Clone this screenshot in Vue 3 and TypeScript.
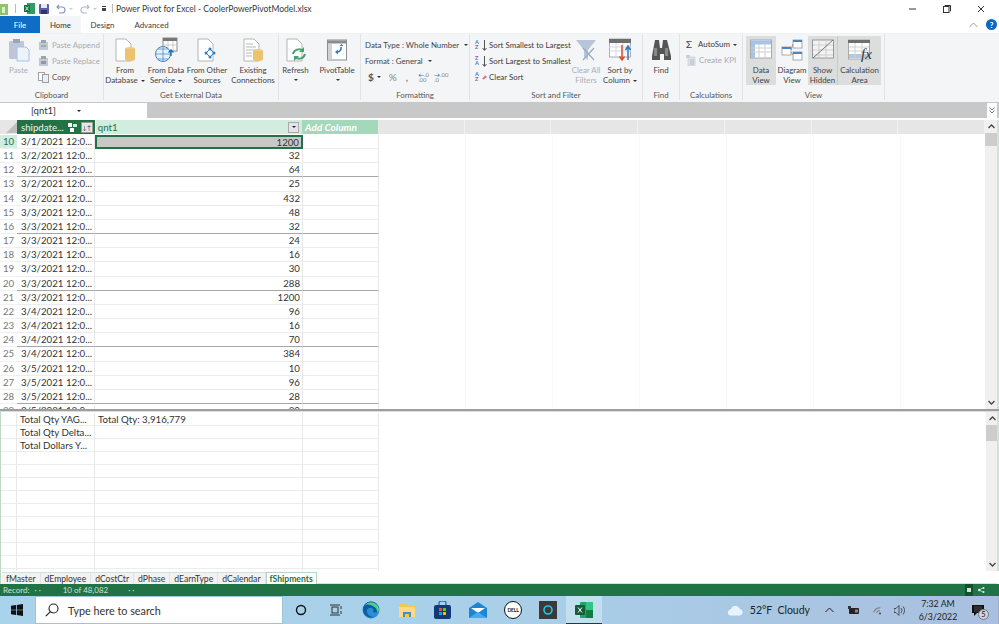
<script setup lang="ts">
interface Row { n: number; d: string; v: number }
const raw: [number, string, number][] = [
  [10,'3/1',1200],[11,'3/2',32],[12,'3/2',64],[13,'3/2',25],[14,'3/2',432],[15,'3/3',48],[16,'3/3',32],
  [17,'3/3',24],[18,'3/3',16],[19,'3/3',30],[20,'3/3',288],[21,'3/3',1200],[22,'3/4',96],[23,'3/4',16],
  [24,'3/4',70],[25,'3/4',384],[26,'3/5',10],[27,'3/5',96],[28,'3/5',28],[29,'3/5',30]
]
const rows: Row[] = raw.map(([n, d, v]) => ({ n, d: d + '/2021 12:0...', v }))
const blanks = Array.from({ length: 7 }, (_, i) => i)
const lower = ['Total Qty YAG...', 'Total Qty Delta...', 'Total Dollars Y...', '', '', '', '', '', '', '', '', '', '']
const sheets = ['fMaster', 'dEmployee', 'dCostCtr', 'dPhase', 'dEarnType', 'dCalendar']
</script>

<template>
  <div class="app">
    <header class="title">
      <div class="qat">
        <svg width="9" height="12" viewBox="0 0 9 12"><rect width="8" height="11" y="1" fill="#8cc56a"/><rect x="2" y="4" width="3" height="6" fill="#d9efc6"/></svg>
        <span class="tick"></span>
        <svg class="q1" width="11" height="11" viewBox="0 0 11 11"><rect x="3" y="0" width="8" height="11" fill="#2f9e63"/><rect x="0" y="2" width="6" height="7" fill="#15703f"/><path d="M1.500 3.500l3 4m0-4l-3 4" stroke="#fff" stroke-width=".8"/></svg>
        <svg class="q2" width="10" height="10" viewBox="0 0 10 10"><rect width="10" height="10" rx="1" fill="#5b5ea6"/><rect x="2" y="0" width="6" height="4" fill="#e8e8f4"/><rect x="2" y="6" width="6" height="4" fill="#30336f"/></svg>
        <svg class="q3" width="10" height="10" viewBox="0 0 10 10"><path d="M3 1L1 3l2 2M1 3h5a3 3 0 0 1 0 6H3" fill="none" stroke="#7d95c2" stroke-width="1.100"/></svg>
        <span class="mini-caret q3b"></span>
        <svg class="q4" width="10" height="10" viewBox="0 0 10 10"><path d="M7 1l2 2-2 2M9 3H4a3 3 0 0 0 0 6h3" fill="none" stroke="#a9bad8" stroke-width="1.100"/></svg>
        <span class="mini-caret q4b"></span>
        <span class="custom"></span>
        <span class="tick t2"></span>
      </div>
      <span class="doc">Power Pivot for Excel - CoolerPowerPivotModel.xlsx</span>
      <div class="win">
        <svg width="8" height="8" viewBox="0 0 8 8"><path d="M0 4h7" stroke="#333" stroke-width="1"/></svg>
        <svg width="8" height="8" viewBox="0 0 8 8"><rect x=".5" y="1.500" width="5.500" height="6" fill="none" stroke="#333"/><path d="M2 1V.5h5.500V6H7" fill="none" stroke="#333"/></svg>
        <svg width="8" height="8" viewBox="0 0 8 8"><path d="M1 1l6 6M7 1L1 7" stroke="#333" stroke-width="1"/></svg>
      </div>
    </header>

    <nav class="tabs">
      <span class="tab file">File</span>
      <span class="tab home">Home</span>
      <span class="tab design">Design</span>
      <span class="tab adv">Advanced</span>
      <span class="spacer"></span>
      <svg class="collapse" width="9" height="6" viewBox="0 0 9 6"><path d="M.5 5l4-4 4 4" fill="none" stroke="#999"/></svg>
      <span class="help">?</span>
    </nav>

    <section class="ribbon">
      <div class="group" style="width:104px">
        <div class="body">
          <div class="big dim" style="width:37px">
            <svg class="ico" width="22" height="24" viewBox="0 0 22 24"><rect x="1" y="3" width="15" height="18" rx="1" fill="#bcc7d8"/><rect x="5" y="1" width="7" height="4" fill="#9aa6b8"/><path d="M9 9h9l3 3v11H9z" fill="#eef2fa" stroke="#a9c1e4"/></svg>
            <span>Paste</span>
          </div>
          <div class="small-col dim-text">
            <div class="small"><svg width="11" height="11" viewBox="0 0 11 11"><rect x="1" y="2" width="9" height="8" fill="#c3c9d2"/><rect x="3" y="0" width="5" height="3" fill="#9aa3ae"/><path d="M3 6h5" stroke="#7f8995"/></svg><span>Paste Append</span></div>
            <div class="small"><svg width="11" height="11" viewBox="0 0 11 11"><rect x="1" y="2" width="9" height="8" fill="#c3c9d2"/><rect x="3" y="0" width="5" height="3" fill="#9aa3ae"/><rect x="3" y="5" width="5" height="3" fill="#8e98a5"/></svg><span>Paste Replace</span></div>
            <div class="small copy"><svg width="11" height="11" viewBox="0 0 11 11"><rect x=".5" y=".5" width="6" height="8" fill="#fff" stroke="#a3a3a3"/><rect x="4.500" y="2.500" width="6" height="8" fill="#e7eef8" stroke="#9d9d9d"/></svg><span>Copy</span></div>
          </div>
        </div>
        <div class="label">Clipboard</div>
      </div>

      <div class="group" style="width:175px">
        <div class="body">
          <div class="big" style="width:42px">
            <svg class="ico" width="22" height="24" viewBox="0 0 22 24"><path d="M2 1h10l5 5v17H2z" fill="#fff" stroke="#b5b5b5"/><ellipse cx="16" cy="11" rx="5" ry="2" fill="#edcd87"/><path d="M11 11v10a5 2 0 0 0 10 0V11z" fill="#edc26f"/></svg>
            <span>From</span><span>Database <i class="caret"></i></span>
          </div>
          <div class="big" style="width:40px">
            <svg class="ico" width="24" height="24" viewBox="0 0 24 24"><rect x="9" y="0" width="14" height="13" fill="#fff" stroke="#8e8e8e"/><rect x="9" y="0" width="14" height="3" fill="#777"/><path d="M9 7h14M14 3v10M19 3v10" stroke="#b9b9b9" stroke-width=".7"/><circle cx="9" cy="16" r="7.500" fill="#e7f1fb" stroke="#3d83c4"/><path d="M2 16h14M9 9v14M4 11h10M4 21h10" stroke="#3d83c4" stroke-width=".7"/><path d="M17 12v6M14.500 14.500L17 12l2.500 2.500" stroke="#1f6fb8" stroke-width="1.400" fill="none"/></svg>
            <span>From Data</span><span>Service <i class="caret"></i></span>
          </div>
          <div class="big" style="width:42px">
            <svg class="ico" width="22" height="24" viewBox="0 0 22 24"><path d="M2 1h10l5 5v17H2z" fill="#fff" stroke="#b5b5b5"/><path d="M14 11l-4 4 4 4 4-4z" fill="none" stroke="#2f79bd"/><circle cx="14" cy="11" r="1.500" fill="#2f79bd"/><circle cx="10" cy="15" r="1.500" fill="#2f79bd"/><circle cx="18" cy="15" r="1.500" fill="#2f79bd"/><circle cx="14" cy="19" r="1.500" fill="#2f79bd"/></svg>
            <span>From Other</span><span>Sources</span>
          </div>
          <div class="big" style="width:50px">
            <svg class="ico" width="22" height="24" viewBox="0 0 22 24"><path d="M2 1h10l5 5v17H2z" fill="#fff" stroke="#b5b5b5"/><path d="M4 6h7M4 9h10M4 12h10M4 15h6M4 18h6" stroke="#a5a5a5" stroke-width=".8"/><ellipse cx="16" cy="13" rx="5" ry="2" fill="#edcd87"/><path d="M11 13v8a5 2 0 0 0 10 0v-8z" fill="#edc26f"/></svg>
            <span>Existing</span><span>Connections</span>
          </div>
        </div>
        <div class="label">Get External Data</div>
      </div>

      <div class="group" style="width:82px">
        <div class="body">
          <div class="big" style="width:33px">
            <svg class="ico" width="22" height="24" viewBox="0 0 22 24"><path d="M2 1h10l5 5v17H2z" fill="#fff" stroke="#b5b5b5"/><path d="M8 16a6 6 0 0 1 10-3M20 16a6 6 0 0 1-10 3" fill="none" stroke="#45a36f" stroke-width="2"/><path d="M19 9v5h-5zM9 23v-5h5z" fill="#45a36f"/></svg>
            <span>Refresh</span><i class="caret under"></i>
          </div>
          <div class="big pivot" style="width:44px">
            <svg class="ico" width="20" height="24" viewBox="0 0 20 24"><rect x=".5" y="2" width="19" height="20" fill="#fff" stroke="#8e8e8e"/><rect x="1" y="2.500" width="18" height="3" fill="#8c8c8c"/><rect x="1" y="6" width="4" height="15" fill="#d2d2d2"/><path d="M14 9a4 4 0 0 1-4 5" fill="none" stroke="#2d7cc1" stroke-width="1.600"/><path d="M8 14l3-2.500v5zM12.500 8l2-2 2 2z" fill="#2d7cc1"/></svg>
            <span>PivotTable</span><i class="caret under"></i>
          </div>
        </div>
        <div class="label">&nbsp;</div>
      </div>

      <div class="group" style="width:109px">
        <div class="body fmt">
          <div class="fline">Data Type : Whole Number <i class="caret"></i></div>
          <div class="fline">Format : General <i class="caret"></i></div>
          <div class="fline syms"><b class="sym">$</b><i class="caret c2"></i><span class="sym g pct">%</span><b class="sym g c3">,</b><span class="dec"><b>←</b>.0<br>.00</span><span class="dec d2"><b>→</b>.00<br>.0</span></div>
        </div>
        <div class="label">Formatting</div>
      </div>

      <div class="group" style="width:173px">
        <div class="body">
          <div class="small-col sort">
            <div class="small"><span class="az"><em>A</em><em class="p">Z</em></span><svg width="5" height="11" viewBox="0 0 5 11"><path d="M2.500 0v10M.5 8l2 2.500L4.500 8" fill="none" stroke="#555"/></svg><span>Sort Smallest to Largest</span></div>
            <div class="small"><span class="az"><em class="p">Z</em><em>A</em></span><svg width="5" height="11" viewBox="0 0 5 11"><path d="M2.500 0v10M.5 8l2 2.500L4.500 8" fill="none" stroke="#555"/></svg><span>Sort Largest to Smallest</span></div>
            <div class="small"><span class="az"><em>A</em><em class="p">Z</em></span><svg width="5" height="8" viewBox="0 0 6 8"><path d="M0 6l4-4 2 2-4 3z" fill="#e0708a"/></svg><span>Clear Sort</span></div>
          </div>
          <div class="big dim" style="width:34px">
            <svg class="ico" width="22" height="24" viewBox="0 0 22 24"><path d="M1 2h20l-8 10v10l-4-3v-7z" fill="#b7c5da"/><path d="M8 10l11 12M19 10L8 22" stroke="#97a9c5" stroke-width="1.200"/></svg>
            <span>Clear All</span><span>Filters</span>
          </div>
          <div class="big" style="width:34px">
            <svg class="ico" width="22" height="24" viewBox="0 0 22 24"><rect x=".5" y="1" width="21" height="18" fill="#fff" stroke="#aaa"/><rect x="0" y="1" width="22" height="4" fill="#6e6e6e"/><path d="M0 9h22M0 13h22M7 5v14M14 5v14" stroke="#cfd8e6"/><path d="M13 7v14M10.500 18.500L13 22l2.500-3.500" stroke="#d9502a" stroke-width="1.500" fill="none"/><path d="M19 22V9M16.500 12L19 8l2.500 4" stroke="#2d7cc1" stroke-width="1.500" fill="none"/></svg>
            <span>Sort by</span><span>Column <i class="caret"></i></span>
          </div>
        </div>
        <div class="label">Sort and Filter</div>
      </div>

      <div class="group" style="width:37px">
        <div class="body">
          <div class="big" style="width:36px">
            <svg class="ico" width="20" height="24" viewBox="0 0 20 24"><path d="M4 2h4l1 8h2l1-8h4l4 16v4h-7v-6H9v6H1v-4z" fill="#555"/><rect x="3" y="10" width="3" height="8" fill="#888"/><rect x="14" y="10" width="3" height="8" fill="#888"/></svg>
            <span>Find</span>
          </div>
        </div>
        <div class="label">Find</div>
      </div>

      <div class="group" style="width:63px">
        <div class="body">
          <div class="small-col calc">
            <div class="small"><span class="sigma">Σ</span><span>AutoSum <i class="caret"></i></span></div>
            <div class="small dim-text"><svg width="10" height="11" viewBox="0 0 10 11"><rect x="0" y="0" width="4" height="3" fill="#c7d3e4"/><rect x="2" y="2" width="7" height="9" fill="#dde3eb" stroke="#b8c0cc" stroke-width=".5"/><path d="M4 5h4M4 7h4M4 9h4" stroke="#99a3b0" stroke-width=".6"/></svg><span>Create KPI</span></div>
          </div>
        </div>
        <div class="label">Calculations</div>
      </div>

      <div class="group view" style="width:142px">
        <div class="body">
          <div class="big on" style="width:30px">
            <svg class="ico" width="22" height="24" viewBox="0 0 22 24"><rect x=".5" y="2" width="21" height="18" fill="#fff" stroke="#aaa"/><rect x="1" y="2.500" width="20" height="4" fill="#a8c4e4"/><rect x="1" y="6" width="4" height="14" fill="#a8c4e4"/><path d="M1 10h20M1 14h20M9 6v14M15 6v14" stroke="#cfcfcf"/></svg>
            <span>Data</span><span>View</span>
          </div>
          <div class="big" style="width:32px">
            <svg class="ico" width="22" height="24" viewBox="0 0 22 24"><rect x="12" y="2" width="9" height="8" fill="#fff" stroke="#aaa"/><rect x="12" y="2" width="9" height="2" fill="#4a86c5"/><rect x="1" y="9" width="9" height="8" fill="#fff" stroke="#aaa"/><rect x="1" y="9" width="9" height="2" fill="#4a86c5"/><rect x="12" y="14" width="9" height="8" fill="#fff" stroke="#aaa"/><rect x="12" y="14" width="9" height="2" fill="#4a86c5"/><path d="M10 12l2-6M10 14l2 3" stroke="#999"/></svg>
            <span>Diagram</span><span>View</span>
          </div>
          <div class="big on first" style="width:30px">
            <svg class="ico" width="22" height="24" viewBox="0 0 22 24"><rect x=".5" y="2" width="21" height="18" fill="#f3f3f3" stroke="#999"/><path d="M1 7h20M1 12h20M1 17h20M7 2v18M14 2v18" stroke="#cfcfcf"/><path d="M1 20L21 2" stroke="#777"/></svg>
            <span>Show</span><span>Hidden</span>
          </div>
          <div class="big on second" style="width:43px">
            <svg class="ico" width="24" height="24" viewBox="0 0 24 24"><rect x=".5" y="2" width="21" height="19" fill="#fff" stroke="#aaa"/><rect x="0" y="2" width="22" height="3" fill="#6e6e6e"/><rect x="1" y="16" width="20" height="4" fill="#b5c8e2"/><path d="M1 9h20M1 13h20M7 5v15M14 5v15" stroke="#cfcfcf"/><text x="13" y="21" font-family="Liberation Serif,serif" font-style="italic" font-size="15" fill="#333">fx</text></svg>
            <span>Calculation</span><span>Area</span>
          </div>
        </div>
        <div class="label">View</div>
      </div>
      <div class="rest"></div>
    </section>

    <div class="formula">
      <div class="namebox"><span>[qnt1]</span><i class="caret dark"></i></div>
      <span class="spacer"></span>
      <span class="expand"><svg width="6" height="7" viewBox="0 0 6 7"><path d="M.5 .5L3 3 5.500 .5M.5 3.500L3 6l2.500-2.500" fill="none" stroke="#777"/></svg></span>
    </div>

    <main class="pane upper">
      <div class="grid">
        <div class="hrow">
          <div class="corner"><i></i></div>
          <div class="hcell ship"><span>shipdate...</span><svg width="10" height="10" viewBox="0 0 10 10"><rect x="0" y="1" width="4" height="4" fill="#fff"/><rect x="5" y="2" width="4" height="3" fill="#cfe8da"/><rect x="2" y="6" width="4" height="4" fill="#fff"/></svg><span class="filter">↓↑</span></div>
          <div class="hcell qnt"><span>qnt1</span><span class="drop"><i class="caret dark"></i></span></div>
          <div class="hcell add">Add Column</div>
          <div v-for="b in blanks" :key="b" class="hcell blank"></div>
        </div>
        <div class="rows">
          <div v-for="r in rows" :key="r.n" class="row" :class="{ sel: r.n === 10, fourth: r.n % 4 === 0 }">
            <div class="num">{{ r.n }}</div>
            <div class="cell date">{{ r.d }}</div>
            <div class="cell val">{{ r.v }}</div>
            <div class="cell addc"></div>
            <div v-for="b in blanks" :key="b" class="cell blank"></div>
          </div>
        </div>
      </div>
      <div class="scroll">
        <span class="arrow"><svg width="7" height="5" viewBox="0 0 7 5"><path d="M.5 4L3.500 1l3 3" fill="none" stroke="#444" stroke-width="1.300"/></svg></span>
        <span class="thumb"></span>
        <span class="spacer"></span>
        <span class="arrow"><svg width="7" height="5" viewBox="0 0 7 5"><path d="M.5 1l3 3 3-3" fill="none" stroke="#444" stroke-width="1.300"/></svg></span>
      </div>
    </main>

    <div class="split"></div>

    <section class="pane lower">
      <div class="grid low-grid">
        <div v-for="(t, i) in lower" :key="i" class="lrow">
          <div class="num"></div>
          <div class="cell date">{{ t }}</div>
          <div class="cell val left">{{ i === 0 ? 'Total Qty: 3,916,779' : '' }}</div>
          <div class="cell addc"></div>
        </div>
      </div>
      <div class="scroll">
        <span class="arrow"><svg width="7" height="5" viewBox="0 0 7 5"><path d="M.5 4L3.500 1l3 3" fill="none" stroke="#444" stroke-width="1.300"/></svg></span>
        <span class="thumb low"></span>
        <span class="spacer"></span>
        <span class="arrow"><svg width="7" height="5" viewBox="0 0 7 5"><path d="M.5 1l3 3 3-3" fill="none" stroke="#444" stroke-width="1.300"/></svg></span>
      </div>
    </section>

    <div class="sheets">
      <span v-for="s in sheets" :key="s" class="sheet">{{ s }}</span>
      <span class="sheet active">fShipments</span>
      <span class="sheet-fill"></span>
    </div>

    <div class="status">
      <span>Record:</span><span class="dots">· ·</span><span class="rec">10 of 48,082</span><span class="dots d2">· ·</span>
      <span class="spacer"></span>
      <span class="viewbtn"><i></i></span>
      <svg class="viewshare" width="7" height="6" viewBox="0 0 7 6"><path d="M1 3l4-2M1 3l4 2" stroke="#cfe4d8" stroke-width=".8"/><circle cx="1.200" cy="3" r="1.200" fill="#e4f0e9"/><circle cx="5.500" cy="1" r="1" fill="#e4f0e9"/><circle cx="5.500" cy="5" r="1" fill="#e4f0e9"/></svg>
    </div>

    <footer class="taskbar">
      <svg class="win-logo" width="12" height="12" viewBox="0 0 12 12"><path d="M0 1.700L5 1v4.700H0zM5.800 .9L12 0v5.700H5.800zM0 6.300h5V11l-5-.7zM5.800 6.300H12V12l-6.200-.9z" fill="#111"/></svg>
      <div class="search">
        <svg width="14" height="14" viewBox="0 0 14 14"><circle cx="8.500" cy="5.500" r="4.500" fill="none" stroke="#222" stroke-width="1.100"/><path d="M5.200 8.800L.8 13.200" stroke="#222" stroke-width="1.200"/></svg>
        <span>Type here to search</span>
      </div>
      <div class="apps">
        <span class="app-slot"><svg width="12" height="12" viewBox="0 0 12 12"><circle cx="6" cy="6" r="4.500" fill="none" stroke="#111" stroke-width="1.400"/></svg></span>
        <span class="app-slot"><svg width="12" height="12" viewBox="0 0 12 12"><rect x="2" y="3" width="6" height="6" fill="none" stroke="#333"/><path d="M0 1h10M0 11h10M11 2v3M11 7v3" stroke="#333"/></svg></span>
        <span class="app-slot"><svg width="18" height="18" viewBox="0 0 18 18"><circle cx="9" cy="9" r="8.500" fill="#2b8fd0"/><path d="M1 9a8 8 0 0 1 16-1c0 3-3 4-6 3 2-4-4-6-6-2-1 3 2 7 7 7a8 8 0 0 1-11-7z" fill="#0f5aa6"/><path d="M3 4a8 8 0 0 1 14 5c0 1-1 2-2 2 1-5-8-9-12-7z" fill="#4fd08a"/></svg></span>
        <span class="app-slot"><svg width="16" height="14" viewBox="0 0 16 14"><path d="M0 1h6l1 2h9v11H0z" fill="#f4c84f"/><path d="M0 4h16v10H0z" fill="#fbdb7c"/><path d="M4 9h8v5H4z" fill="#3d8ed4"/><path d="M6 11h4v3H6z" fill="#f4c84f"/></svg></span>
        <span class="app-slot"><svg width="17" height="18" viewBox="0 0 17 18"><rect x="0" y="4" width="17" height="14" rx="2" fill="#123a76"/><path d="M5 4V2a2 2 0 0 1 2-2h3a2 2 0 0 1 2 2v2" fill="none" stroke="#2b68b8" stroke-width="1.300"/><rect x="5" y="7" width="3" height="3" fill="#f25022"/><rect x="9" y="7" width="3" height="3" fill="#7fba00"/><rect x="5" y="11" width="3" height="3" fill="#00a4ef"/><rect x="9" y="11" width="3" height="3" fill="#ffb900"/></svg></span>
        <span class="app-slot"><svg width="18" height="16" viewBox="0 0 18 16"><path d="M0 6l9-6 9 6v10H0z" fill="#1b86d6"/><path d="M2 6h14l-7 5z" fill="#fff"/><path d="M0 16l9-6 9 6z" fill="#4ba8ea"/></svg></span>
        <span class="app-slot"><span class="dell">DELL</span></span>
        <span class="app-slot"><svg width="18" height="18" viewBox="0 0 18 18"><rect width="18" height="18" fill="#3a3a3a"/><circle cx="9" cy="9" r="4" fill="none" stroke="#2fc4dd" stroke-width="1.600"/></svg></span>
        <span class="app-slot current"><svg width="18" height="16" viewBox="0 0 18 16"><rect x="5" y="0" width="13" height="16" rx="1" fill="#21a366"/><rect x="11" y="0" width="7" height="8" fill="#33c481"/><rect x="11" y="8" width="7" height="8" fill="#107c41"/><rect x="0" y="3" width="10" height="10" rx="1" fill="#185c37"/><path d="M3 5.500l4 5m0-5l-4 5" stroke="#fff" stroke-width="1"/></svg></span>
      </div>
      <span class="spacer"></span>
      <div class="tray">
        <svg class="cloud" width="17" height="12" viewBox="0 0 17 12"><path d="M4 12a3.500 3.500 0 0 1-.5-7A5 5 0 0 1 13 4.500 3.800 3.800 0 0 1 13 12z" fill="#e8f3fb" stroke="#79b9e6" stroke-width=".6"/></svg>
        <span class="weather">52°F&nbsp; Cloudy</span>
        <svg class="t-up" width="9" height="6" viewBox="0 0 9 6"><path d="M.5 5l4-4 4 4" fill="none" stroke="#222"/></svg>
        <svg class="t-bat" width="12" height="8" viewBox="0 0 12 8"><rect x="1" y="2" width="10" height="6" rx="1" fill="#222"/><rect x="0" y="0" width="3" height="3" fill="#333"/><rect x="7" y="3.500" width="3" height="3" fill="#888"/></svg>
        <svg class="t-wifi" width="10" height="10" viewBox="0 0 10 10"><path d="M1 5a7 7 0 0 1 8 0M3 7a4 4 0 0 1 4 0" fill="none" stroke="#777" transform="rotate(-35 5 5)"/><circle cx="8" cy="8.500" r="1" fill="#444"/></svg>
        <svg class="t-vol" width="12" height="11" viewBox="0 0 12 11"><path d="M0 3.500h2l3-3v10l-3-3H0z" fill="none" stroke="#333" stroke-width=".8"/><path d="M7 3a4 4 0 0 1 0 5M9 1.500a6 6 0 0 1 0 8" fill="none" stroke="#333" stroke-width=".8"/></svg>
        <div class="clock"><span>7:32 AM</span><span>6/3/2022</span></div>
        <div class="notif"><svg width="12" height="11" viewBox="0 0 12 11"><path d="M0 0h12v8H5L2 11V8H0z" fill="#111"/><path d="M2 2h8M2 4h8M2 6h5" stroke="#777" stroke-width=".6"/></svg><span class="badge">5</span></div>
      </div>
    </footer>
  </div>
</template>

<style>
html, body { margin: 0; background: #fff; }
</style>

<style scoped>
* { box-sizing: border-box; }
i, em { font-style: normal; }
.app { width: 999px; height: 624px; display: flex; flex-direction: column; overflow: hidden; background: #fff; color: #3c3c3c; font-family: Lato, Roboto, sans-serif; font-size: 7.900px; }
.spacer { flex: 1; }
svg { flex: none; }

.title { height: 16px; display: flex; align-items: center; flex: none; padding-top: 1px; }
.qat { width: 116px; display: flex; align-items: center; flex: none; height: 14px; }
.tick { width: 1px; height: 9px; background: #bbb; margin-left: 6px; }
.q1 { margin-left: 8px; }
.q2 { margin-left: 4px; }
.q3 { margin-left: 7px; }
.q4 { margin-left: 7px; }
.mini-caret { width: 0; height: 0; border: 2px solid transparent; border-top: 2px solid #ccc; margin: 2px 0 0 3px; }
.q4b { margin-right: 4px; }
.custom { width: 4px; height: 5px; margin-left: 1px; background: linear-gradient(#444 0 1px, transparent 1px 2px, #444 2px); }
.t2 { margin-left: 6px; }
.doc { font-size: 8.550px; color: #3a3a3a; }
.win { margin-left: auto; width: 92px; display: flex; justify-content: space-between; padding-right: 14px; padding-left: 2px; }

.tabs { height: 17px; flex: none; display: flex; align-items: stretch; font-size: 7.900px; }
.tab { display: flex; align-items: center; justify-content: center; }
.file { width: 40px; background: #0f6dc6; color: #fff; }
.home { width: 41px; background: #f4f5f7; color: #333; }
.design { margin-left: 9px; width: 25px; }
.adv { margin-left: 20px; width: 33px; }
.collapse { align-self: center; margin-right: 8px; }
.help { width: 11px; height: 11px; border-radius: 50%; align-self: center; background: #0b68c2; color: #fff; font-size: 8px; font-weight: 700; display: flex; align-items: center; justify-content: center; margin-right: 2px; }

.ribbon { height: 69px; flex: none; display: flex; background: #f4f5f7; border-top: 1px solid #f0f1f3; }
.group { flex: none; display: flex; flex-direction: column; border-right: 1px solid #e1e3e6; margin-bottom: 2px; }
.body { height: 56px; display: flex; padding-top: 2px; flex: none; }
.view .body { padding-left: 3px; }
.label { text-align: center; color: #555; line-height: 10px; }
.rest { flex: 1; }
.big { flex: none; display: flex; flex-direction: column; align-items: center; line-height: 10px; white-space: nowrap; color: #444; }
.ico { height: 26px; margin-bottom: 2px; margin-top: 1px; }
.pivot { margin-left: 3px; }
.big.dim { color: #aab0b8; }
.big.on { background: #dcdddd; height: 49px; }
.big.first { border-right: 1px solid #c9c9c9; }
.small-col { display: flex; flex-direction: column; padding-left: 1px; padding-top: 1px; }
.small { height: 16px; display: flex; align-items: center; gap: 3px; white-space: nowrap; }
.dim-text { color: #a7abb2; }
.copy { color: #555; }
.caret { display: inline-block; width: 0; height: 0; border-left: 2px solid transparent; border-right: 2px solid transparent; border-top: 2px solid #333; vertical-align: middle; margin-left: 1px; }
.caret.under { margin-top: 4px; }
.caret.dark { border-top-color: #222; }

.fmt { flex-direction: column; padding-left: 4px; padding-top: 3px; }
.fline { height: 16px; display: flex; align-items: center; white-space: pre; color: #444; flex: none; }
.fline .caret { margin-left: 3px; }
.syms { color: #555; }
.sym { font-size: 10px; margin-left: 3px; }
.sym.g { color: #888; margin-left: 5px; }
.caret.c2 { margin-left: 3px; }
.pct { margin-left: 8px !important; }
.c3 { margin-left: 9px !important; }
.dec { font-size: 6px; line-height: 5.500px; margin-left: 10px; color: #888; }
.dec b { color: #2d7cc1; font-size: 6px; }
.dec.d2 { margin-left: 5px; }

.sort { padding-left: 5px; width: 99px; flex: none; }
.sort .small { gap: 1px; }
.sort .small > span:last-child { margin-left: 1px; }
.az { width: 6px; flex: none; display: flex; flex-direction: column; font-size: 5.500px; line-height: 5.500px; font-weight: 700; color: #3a7fbe; }
.az .p { color: #8b5fb0; }
.calc { padding-left: 6px; padding-top: 0; }
.sigma { font-size: 10px; color: #444; width: 9px; flex: none; }

.formula { height: 16px; flex: none; display: flex; background: #c8c8c8; align-items: stretch; padding-right: 2px; margin-bottom: 2px; border-top: 1px solid #c8c8c8; }
.namebox { width: 147px; background: #fff; display: flex; align-items: center; gap: 20px; padding-left: 31px; font-size: 9.500px; color: #333; }
.expand { width: 10px; background: #fff; display: flex; align-items: center; justify-content: center; }

.pane { display: flex; flex: none; overflow: hidden; font-size: 9.700px; color: #333; background: #fff; border-right: 2px solid #cfe3d8; }
.upper { height: 289px; }
.lower { height: 159px; border-left: 1px solid #b7d8c5; }
.grid { width: 985px; flex: none; overflow: hidden; }
.low-grid { padding-top: 1px; }
.hrow { display: flex; height: 15px; }
.corner { width: 17px; background: #e6e6e6; display: flex; justify-content: flex-end; align-items: flex-end; padding-bottom: 1px; height: 14px; }
.corner i { border-style: solid; border-width: 0 0 11px 11px; border-color: transparent transparent #bfbfbf transparent; }
.hcell { display: flex; align-items: center; padding: 0 2px 0 4px; height: 14px; white-space: nowrap; }
.ship { width: 78px; background: #217346; color: #e8f5ee; gap: 3px; }
.ship span:first-child { flex: 1; min-width: 0; }
.filter { width: 12px; height: 11px; background: #e8e8e8; color: #335; font-size: 6px; line-height: 9px; text-align: center; border: 1px solid #999; flex: none; }
.qnt { width: 208px; background: #d2ecdf; color: #217346; justify-content: space-between; padding-left: 2px; border-left: 1px solid #fff; }
.drop { width: 11px; height: 11px; background: #e4e4ec; border: 1px solid #aaa; display: flex; align-items: center; justify-content: center; margin-right: 1px; }
.drop .caret { margin: 0; }
.add { width: 76px; background: #a3d8bb; color: #fff; font-style: italic; font-weight: 700; padding-left: 3px; font-size: 10px; }
.hcell.blank { width: 87px; background: #e6e6e6; padding: 0; border-right: 1px solid #f1f1f1; }

.rows { height: 274px; overflow: hidden; }
.row { display: flex; height: 14.170px; }
.num { width: 17px; flex: none; color: #777; text-align: center; font-size: 9.700px; line-height: 13px; border-bottom: 1px solid #f1f1f1; }
.row.sel .num { background: #d2ecdf; color: #217346; }
.cell { height: 100%; line-height: 13.500px; border-right: 1px solid #e8e8e8; border-bottom: 1px solid #ececec; white-space: nowrap; overflow: hidden; flex: none; }
.date { width: 78px; padding-left: 4px; }
.val { width: 208px; text-align: right; padding-right: 2px; }
.left { text-align: left; padding-left: 3px; }
.addc { width: 76px; }
.cell.blank { width: 87px; border-right: 1px solid #f8f8f8; border-bottom: none; }
.row.fourth .date, .row.fourth .val, .row.fourth .addc { border-bottom: 1px solid #a6a6a6; }
.row.sel .val { background: #c8c8c8; border: 2px solid #217346; line-height: 10px; }

.scroll { width: 12px; flex: none; background: #f0f0f0; display: flex; flex-direction: column; }
.arrow { height: 13px; display: flex; align-items: center; justify-content: center; flex: none; }
.thumb { height: 13px; background: #cdcdcd; flex: none; }
.thumb.low { height: 16px; }

.split { height: 3px; flex: none; background: #9e9e9e; border-bottom: 1px solid #ddd; }
.lrow { display: flex; height: 13px; }
.lrow .num { height: 13px; width: 16px; border-right: 1px solid #e8e8e8; border-bottom: 1px solid #ececec; }
.lrow .cell { line-height: 12.500px; }
.lrow .date { padding-left: 3px; }

.sheets { height: 13px; flex: none; display: flex; background: #fff; padding: 1px 2px 0 1px; border-left: 1px solid #b7d8c5; font-size: 8.600px; color: #333; }
.sheet { padding: 0 4px; background: #f2f2f2; line-height: 12px; border-right: 1px solid #e2e2e2; border-top: 1px solid #cfe3d8; }
.sheet.active { background: #fff; color: #217346; font-weight: 700; border: 1px solid #b4d6c3; border-bottom: none; padding: 0 3px; }
.sheet-fill { flex: 1; border-bottom: 1px solid #cfe3d8; }

.status { height: 12px; flex: none; background: #217346; color: #c9e4d5; font-size: 8px; display: flex; align-items: center; padding: 0 14px 0 3px; }
.dots { margin-left: 5px; }
.rec { margin-left: 22px; }
.dots.d2 { margin-left: 20px; }
.viewbtn { width: 8px; height: 12px; background: #14502e; display: flex; align-items: center; justify-content: center; margin-right: 5px; }
.viewbtn i { width: 4px; height: 4px; background: #cfe4d8; }

.taskbar { height: 28px; flex: none; display: flex; align-items: center; background: linear-gradient(90deg, #a8d3ea 0%, #a9d0e8 50%, #a9bfdf 100%); border-right: 1px solid #9fb0cc; }
.win-logo { margin-left: 11px; }
.search { width: 248px; height: 28px; margin-left: 12px; background: #fff; display: flex; align-items: center; gap: 9px; padding-left: 9px; font-size: 10.800px; color: #333; flex: none; border: 1px solid #9bc5dc; }
.apps { display: flex; align-items: center; height: 28px; }
.app-slot { width: 35.400px; height: 28px; display: flex; align-items: center; justify-content: center; }
.dell { width: 18px; height: 18px; border-radius: 50%; background: #fff; border: 1.300px solid #111; color: #111; font-size: 5px; font-weight: 700; display: flex; align-items: center; justify-content: center; letter-spacing: -.2px; }
.current { background: #c2dff0; border-bottom: 1px solid #333; }
.tray { display: flex; align-items: center; height: 28px; color: #222; padding-right: 9px; }
.cloud { margin-right: 6px; }
.weather { font-size: 10.500px; margin-right: 15px; }
.t-up { margin-right: 14px; }
.t-bat { margin-right: 12px; }
.t-wifi { margin-right: 12px; }
.t-vol { margin-right: 9px; }
.clock { display: flex; flex-direction: column; align-items: center; font-size: 8.800px; line-height: 13px; width: 46px; }
.notif { width: 28px; padding-left: 11px; position: relative; height: 20px; display: flex; align-items: center; }
.badge { position: absolute; left: 17px; top: 9px; width: 11px; height: 11px; border-radius: 50%; border: 1px solid #777; background: #cfd5dd; color: #111; font-size: 7.500px; line-height: 9px; text-align: center; }
</style>
